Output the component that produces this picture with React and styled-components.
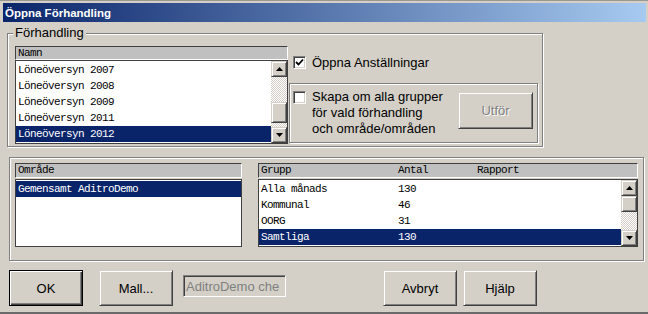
import React from "react";
import styled, { createGlobalStyle, css } from "styled-components";

const namnRows = [
  "Löneöversyn 2007",
  "Löneöversyn 2008",
  "Löneöversyn 2009",
  "Löneöversyn 2011",
  "Löneöversyn 2012",
];

const gruppRows = [
  { name: "Alla månads", antal: "130" },
  { name: "Kommunal", antal: "46" },
  { name: "OORG", antal: "31" },
  { name: "Samtliga", antal: "130" },
];

const GlobalStyle = createGlobalStyle`
  * { box-sizing: border-box; }
  html, body {
    margin: 0;
    padding: 0;
    background: #d4d0c8;
    overflow: hidden;
  }
`;

const raised = css`
  background: #d4d0c8;
  border: 1px solid;
  border-color: #d4d0c8 #404040 #404040 #d4d0c8;
  box-shadow: inset 1px 1px #fff, inset -1px -1px #808080;
`;

const Window = styled.div`
  width: 648px;
  height: 314px;
  background: #d4d0c8;
  border-top: 1px solid #9a9890;
  border-bottom: 2px solid #6a6a6a;
  padding: 2px 2px 0 3px;
  display: flex;
  flex-direction: column;
  font-family: "Liberation Sans", Arial, sans-serif;
  font-size: 13px;
  color: #000;
`;

const TitleBar = styled.div`
  height: 19px;
  flex: none;
  display: flex;
  align-items: center;
  padding-left: 2px;
  background: linear-gradient(to right, #0a246a, #a6caf0);
  color: #fff;
  font-weight: bold;
  font-size: 11.5px;
`;

const GroupBox = styled.div`
  position: relative;
  flex: none;
  width: ${(p) => p.$w}px;
  height: ${(p) => p.$h}px;
  margin: ${(p) => p.$m};
  padding: ${(p) => p.$pad};
  border: 1px solid #808080;
  box-shadow: inset 1px 1px #fff, 1px 1px #fff;
  display: flex;
  align-items: flex-start;
`;

const Legend = styled.span`
  position: absolute;
  top: -9px;
  left: 5px;
  padding: 0 2px;
  background: #d4d0c8;
  line-height: 15px;
`;

const ListPanel = styled.div`
  width: ${(p) => p.$w}px;
  flex: none;
  display: flex;
  flex-direction: column;
`;

const ListHeader = styled.div`
  height: ${(p) => p.$h}px;
  margin-bottom: ${(p) => p.$gap || 0}px;
  background: #c0c0c0;
  border: 1px solid;
  border-color: #404040 #fff #fff #404040;
  display: grid;
  grid-template-columns: ${(p) => p.$cols || "1fr"};
  align-items: center;
  padding-left: 2px;
  font-family: "Liberation Mono", "Courier New", monospace;
  font-size: 11px;
  letter-spacing: -0.6px;
  line-height: 1;
`;

const ListBox = styled.div`
  height: ${(p) => p.$h}px;
  border: 1px solid #404040;
  background: #fff;
  display: flex;
`;

const Rows = styled.div`
  flex: 1;
  padding-top: 1px;
  display: flex;
  flex-direction: column;
`;

const Row = styled.div`
  height: 16px;
  flex: none;
  display: grid;
  grid-template-columns: ${(p) => p.$cols || "1fr"};
  align-items: center;
  padding-left: 2px;
  font-family: "Liberation Mono", "Courier New", monospace;
  font-size: 11px;
  letter-spacing: -0.6px;
  white-space: nowrap;
  background: ${(p) => (p.$selected ? "#0a246a" : "transparent")};
  color: ${(p) => (p.$selected ? "#fff" : "#000")};
`;

const ScrollBar = styled.div`
  width: 16px;
  flex: none;
  display: flex;
  flex-direction: column;
`;

const ArrowButton = styled.div`
  ${raised};
  height: 16px;
  flex: none;
  display: flex;
  align-items: center;
  justify-content: center;
`;

const Track = styled.div`
  height: ${(p) => p.$h}px;
  flex: none;
  background-image: conic-gradient(#fff 25%, #d4d0c8 0 50%, #fff 0 75%, #d4d0c8 0);
  background-size: 2px 2px;
`;

const Thumb = styled.div`
  ${raised};
  height: ${(p) => p.$h}px;
  flex: none;
`;

const RightColumn = styled.div`
  margin-left: 1px;
  display: flex;
  flex-direction: column;
`;

const CheckRow = styled.label`
  display: flex;
  align-items: center;
  margin-top: ${(p) => p.$top || 0}px;
  padding-left: 4px;
  height: 13px;
`;

const CheckBox = styled.span`
  width: 13px;
  height: 13px;
  flex: none;
  background: #fff;
  border: 1px solid;
  border-color: #808080 #fff #fff #808080;
  box-shadow: inset 1px 1px #404040, inset -1px -1px #d4d0c8;
  display: flex;
  align-items: center;
  justify-content: center;
  margin-top: ${(p) => p.$top || 0}px;
`;

const CheckLabel = styled.span`
  margin-left: 6px;
  line-height: 16px;
  white-space: nowrap;
`;

const InnerFrame = styled.div`
  width: 249px;
  height: 60px;
  margin-top: 14px;
  padding: 5px 4px 0 3px;
  border: 1px solid #808080;
  box-shadow: inset 1px 1px #fff, 1px 1px #fff;
  display: flex;
  align-items: flex-start;
`;

const Button = styled.button`
  ${raised};
  width: ${(p) => p.$w || 74}px;
  height: ${(p) => p.$h || 36}px;
  flex: none;
  margin: ${(p) => p.$m || 0};
  padding: 0;
  font-family: "Liberation Sans", Arial, sans-serif;
  font-size: 13px;
  color: ${(p) => (p.disabled ? "#808080" : "#000")};
  text-shadow: ${(p) => (p.disabled ? "1px 1px #fff" : "none")};
  ${(p) =>
    p.$default &&
    css`
      border-color: #000;
      box-shadow: inset 1px 1px #fff, inset -1px -1px #404040, inset -2px -2px #808080;
    `}
`;

const ButtonRow = styled.div`
  display: flex;
  align-items: flex-start;
  margin: 9px 0 0 6px;
`;

const TextField = styled.div`
  width: 103px;
  height: 22px;
  flex: none;
  margin: 5px 0 0 10px;
  border: 1px solid;
  border-color: #808080 #fff #fff #808080;
  box-shadow: inset 1px 1px #404040, inset -1px -1px #d4d0c8;
  padding: 0 0 0 2px;
  display: flex;
  align-items: center;
  overflow: hidden;
  white-space: nowrap;
  color: #808080;
  font-size: 13px;
`;

const Arrow = ({ down }) => (
  <svg width="7" height="4" viewBox="0 0 7 4">
    <path d={down ? "M0 0h7L3.5 4z" : "M0 4h7L3.5 0z"} fill="#000" />
  </svg>
);

const Check = () => (
  <svg width="9" height="9" viewBox="0 0 9 9">
    <path d="M1 4l2.5 2.5L8 1.5" stroke="#000" strokeWidth="1.8" fill="none" />
  </svg>
);

const gruppCols = "137px 79px 1fr";

export default function App() {
  return (
    <>
      <GlobalStyle />
      <Window>
        <TitleBar>Öppna Förhandling</TitleBar>

        <GroupBox $w={536} $h={114} $m="11px 0 0 4px" $pad="12px 0 0 7px">
          <Legend>Förhandling</Legend>
          <ListPanel $w={273}>
            <ListHeader $h={14}>Namn</ListHeader>
            <ListBox $h={84}>
              <Rows>
                {namnRows.map((r, i) => (
                  <Row key={r} $selected={i === 4}>
                    {r}
                  </Row>
                ))}
              </Rows>
              <ScrollBar>
                <ArrowButton>
                  <Arrow />
                </ArrowButton>
                <Track $h={25} />
                <Thumb $h={21} />
                <Track $h={4} />
                <ArrowButton>
                  <Arrow down />
                </ArrowButton>
              </ScrollBar>
            </ListBox>
          </ListPanel>

          <RightColumn>
            <CheckRow $top={10}>
              <CheckBox>
                <Check />
              </CheckBox>
              <CheckLabel>Öppna Anställningar</CheckLabel>
            </CheckRow>
            <InnerFrame>
              <CheckBox $top={2} />
              <CheckLabel>
                Skapa om alla grupper
                <br />
                för vald förhandling
                <br />
                och område/områden
              </CheckLabel>
              <Button disabled $w={75} $h={37} $m="3px 0 0 auto">
                Utför
              </Button>
            </InnerFrame>
          </RightColumn>
        </GroupBox>

        <GroupBox $w={635} $h={104} $m="10px 0 0 6px" $pad="5px 0 0 5px">
          <ListPanel $w={227}>
            <ListHeader $h={15} $gap={1}>
              Område
            </ListHeader>
            <ListBox $h={68}>
              <Rows>
                <Row $selected>Gemensamt AditroDemo</Row>
              </Rows>
            </ListBox>
          </ListPanel>

          <ListPanel $w={380} style={{ marginLeft: 16 }}>
            <ListHeader $h={15} $gap={1} $cols={gruppCols}>
              <span>Grupp</span>
              <span>Antal</span>
              <span>Rapport</span>
            </ListHeader>
            <ListBox $h={68}>
              <Rows>
                {gruppRows.map((r, i) => (
                  <Row key={r.name} $cols={gruppCols} $selected={i === 3}>
                    <span>{r.name}</span>
                    <span>{r.antal}</span>
                    <span />
                  </Row>
                ))}
              </Rows>
              <ScrollBar>
                <ArrowButton>
                  <Arrow />
                </ArrowButton>
                <Thumb $h={16} />
                <Track $h={18} />
                <ArrowButton>
                  <Arrow down />
                </ArrowButton>
              </ScrollBar>
            </ListBox>
          </ListPanel>
        </GroupBox>

        <ButtonRow>
          <Button $default>OK</Button>
          <Button $m="0 0 0 16px">Mall...</Button>
          <TextField>AditroDemo che</TextField>
          <Button $m="0 0 0 97px">Avbryt</Button>
          <Button $m="0 0 0 6px">Hjälp</Button>
        </ButtonRow>
      </Window>
    </>
  );
}
